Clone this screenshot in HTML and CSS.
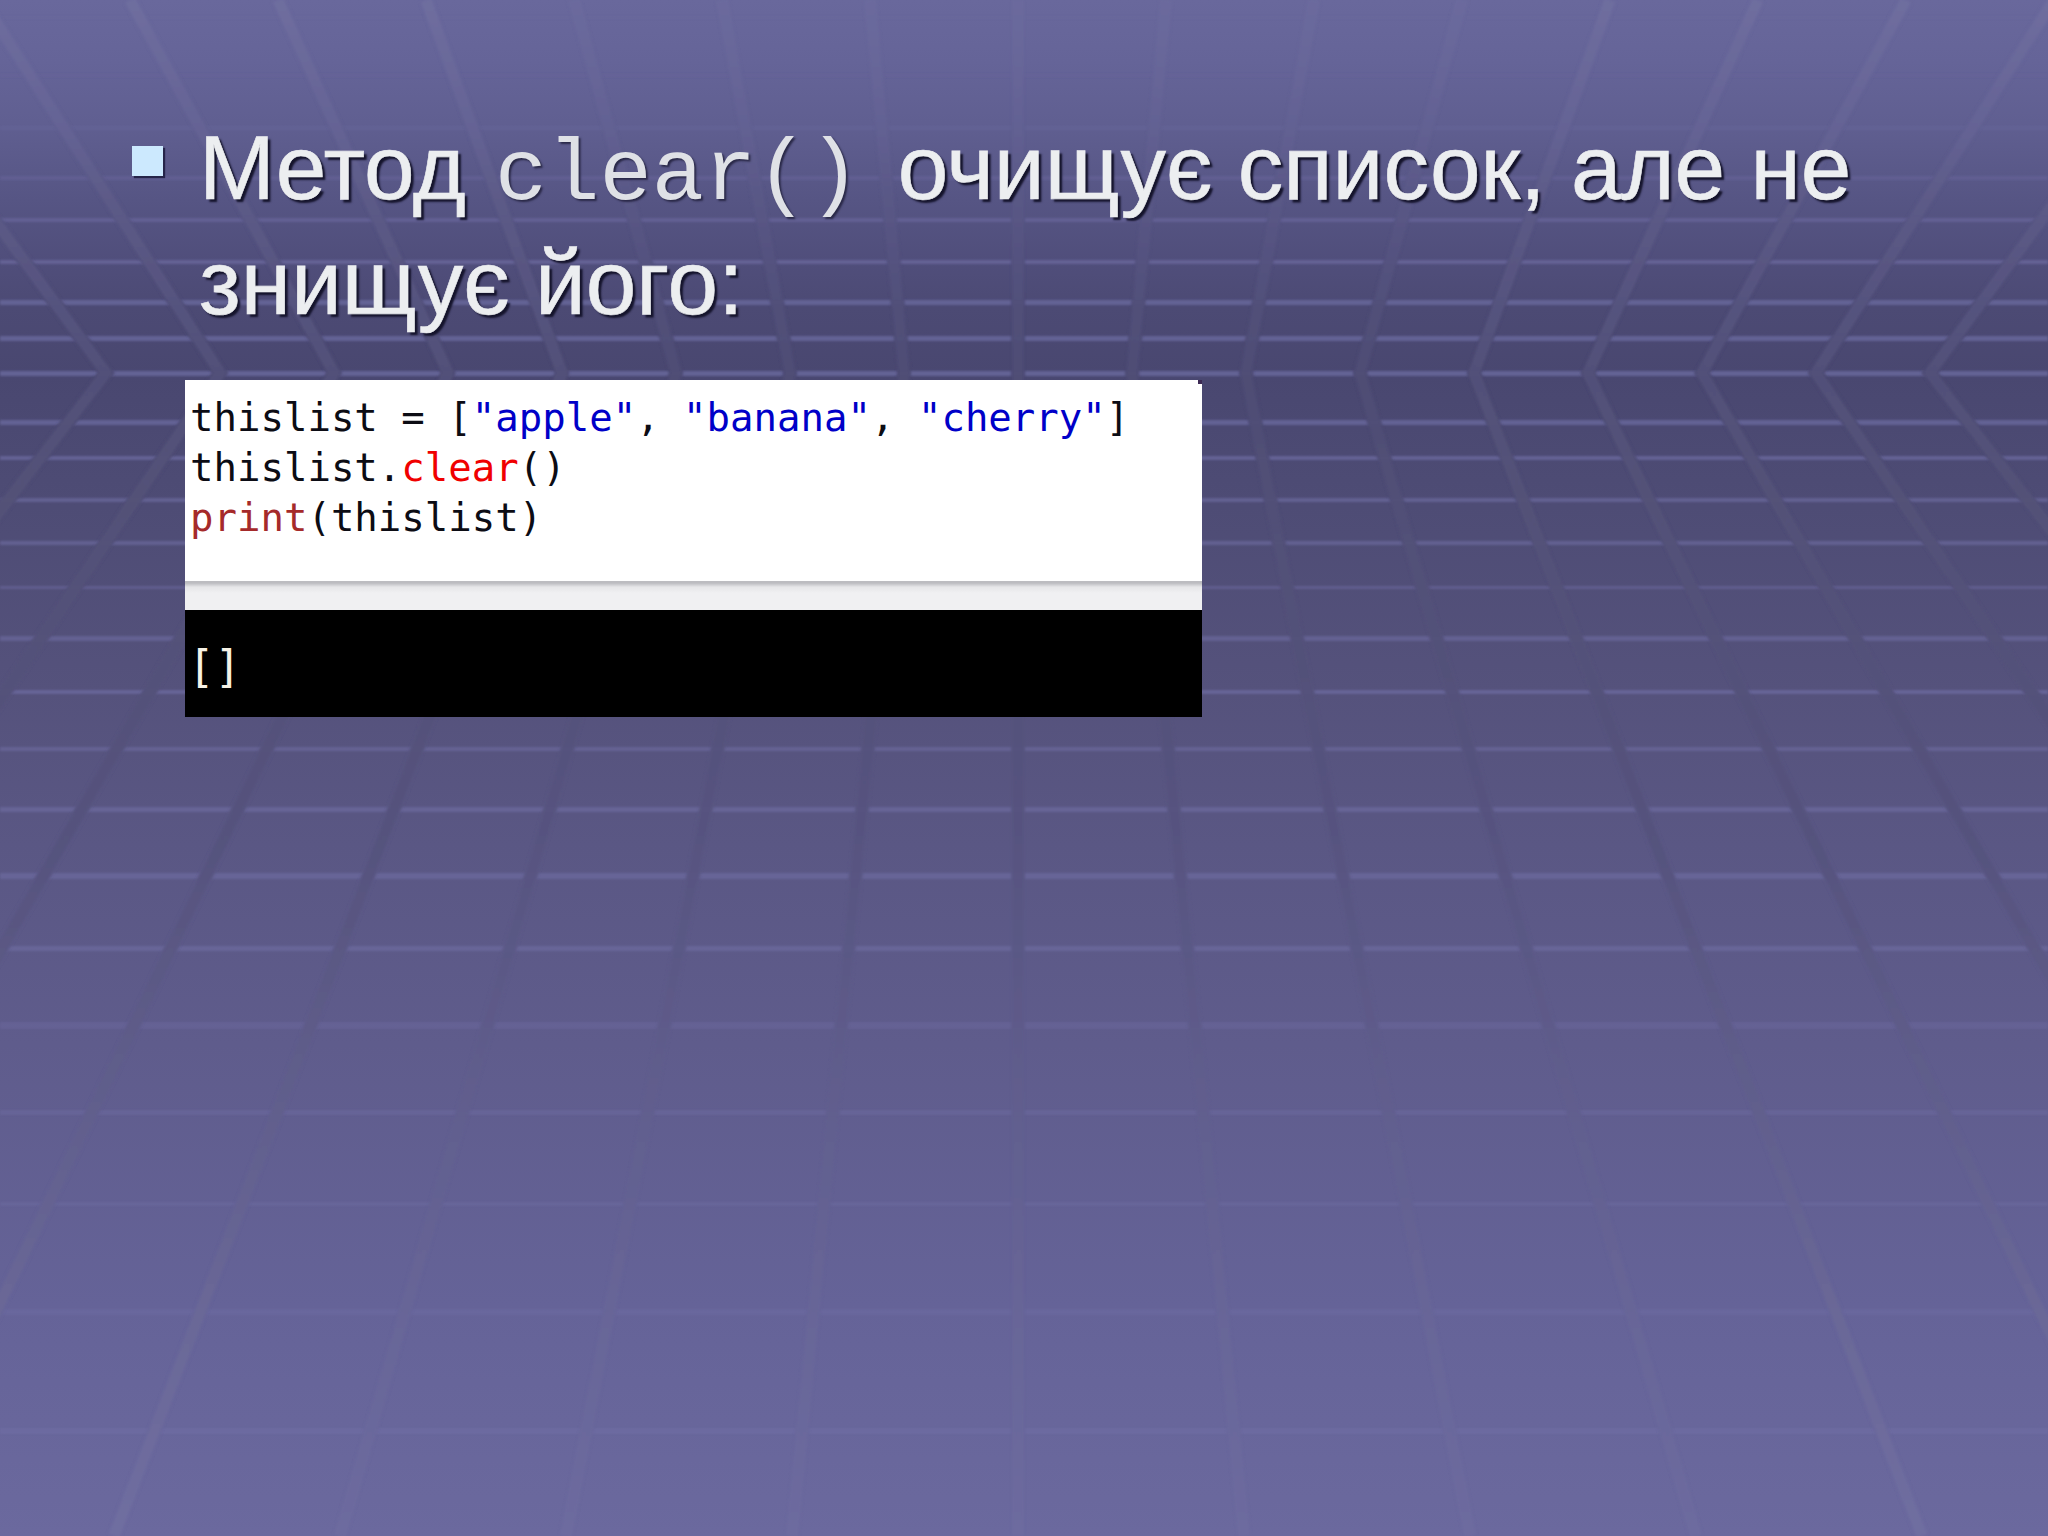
FILE: index.html
```html
<!DOCTYPE html>
<html lang="uk">
<head>
<meta charset="utf-8">
<title>Метод clear()</title>
<link rel="stylesheet" href="styles.css">
</head>
<body>
<main class="slide">
  <svg class="backdrop" viewBox="0 0 2048 1536" width="2048" height="1536" aria-hidden="true">
    <defs>
      <linearGradient id="bg" gradientUnits="userSpaceOnUse" x1="0" y1="0" x2="0" y2="1536">
        <stop offset="0" stop-color="#69689c"/>
        <stop offset="0.04" stop-color="#656498"/>
        <stop offset="0.08" stop-color="#605f91"/>
        <stop offset="0.13" stop-color="#565584"/>
        <stop offset="0.17" stop-color="#504e7b"/>
        <stop offset="0.2" stop-color="#4c4a74"/>
        <stop offset="0.243" stop-color="#494770"/>
        <stop offset="0.33" stop-color="#4e4c75"/>
        <stop offset="0.45" stop-color="#55527c"/>
        <stop offset="0.55" stop-color="#5a5784"/>
        <stop offset="0.68" stop-color="#5f5c8c"/>
        <stop offset="0.85" stop-color="#656398"/>
        <stop offset="1" stop-color="#6b699e"/>
      </linearGradient>
      <linearGradient id="bar" gradientUnits="userSpaceOnUse" x1="0" y1="0" x2="0" y2="1536">
        <stop offset="0" stop-color="#6f6e9f"/>
        <stop offset="0.08" stop-color="#666496"/>
        <stop offset="0.13" stop-color="#5d5b88"/>
        <stop offset="0.243" stop-color="#53517a"/>
        <stop offset="0.33" stop-color="#555379"/>
        <stop offset="0.45" stop-color="#54527a"/>
        <stop offset="0.55" stop-color="#55527d"/>
        <stop offset="0.68" stop-color="#5e5c89"/>
        <stop offset="0.85" stop-color="#6a6897"/>
        <stop offset="1" stop-color="#706ea1"/>
      </linearGradient>
      <filter id="soft" x="0" y="-0.01" width="1" height="1.02">
        <feGaussianBlur stdDeviation="0.9"/>
      </filter>
    </defs>
    <rect width="2048" height="1536" fill="url(#bg)"/>
    <g class="rules">
      <rect y="16" width="2048" height="3" opacity="0.1"/>
      <rect y="74" width="2048" height="3" opacity="0.14"/>
      <rect y="126" width="2048" height="4" opacity="0.25"/>
      <rect y="176" width="2048" height="4" opacity="0.38"/>
      <rect y="218" width="2048" height="4" opacity="0.55"/>
      <rect y="260" width="2048" height="4" opacity="0.68"/>
      <rect y="300" width="2048" height="5" opacity="0.72"/>
      <rect y="336" width="2048" height="5" opacity="0.72"/>
      <rect y="371" width="2048" height="5" opacity="0.75"/>
      <rect y="420" width="2048" height="5" opacity="0.72"/>
      <rect y="456" width="2048" height="4" opacity="0.7"/>
      <rect y="498" width="2048" height="4" opacity="0.65"/>
      <rect y="541" width="2048" height="4" opacity="0.62"/>
      <rect y="586" width="2048" height="3" opacity="0.55"/>
      <rect y="636" width="2048" height="5" opacity="0.6"/>
      <rect y="690" width="2048" height="4" opacity="0.7"/>
      <rect y="747" width="2048" height="4" opacity="0.6"/>
      <rect y="807" width="2048" height="5" opacity="0.65"/>
      <rect y="873" width="2048" height="6" opacity="0.65"/>
      <rect y="946" width="2048" height="5" opacity="0.62"/>
      <rect y="1022" width="2048" height="7" opacity="0.4"/>
      <rect y="1110" width="2048" height="5" opacity="0.42"/>
      <rect y="1202" width="2048" height="4" opacity="0.45"/>
      <rect y="1309" width="2048" height="6" opacity="0.5"/>
      <rect y="1428" width="2048" height="6" opacity="0.7"/>
    </g>
    <g class="grid">
      <path class="gaps" d="M870 0L904 373L792 1536M1166 0L1132 373L1244 1536M722 0L790 373L566 1536M1314 0L1246 373L1470 1536M574 0L676 373L340 1536M1462 0L1360 373L1696 1536M426 0L562 373L114 1536M1610 0L1474 373L1922 1536M278 0L448 373L-112 1536M1758 0L1588 373L2148 1536M130 0L334 373L-338 1536M1906 0L1702 373L2374 1536M-18 0L220 373L-564 1536M2054 0L1816 373L2600 1536M-166 0L106 373L-790 1536M2202 0L1930 373L2826 1536M1018 0V1536"/>
      <path class="bars bars-inner" d="M870 0L904 373L792 1536M1166 0L1132 373L1244 1536M722 0L790 373L566 1536M1314 0L1246 373L1470 1536M574 0L676 373L340 1536M1462 0L1360 373L1696 1536M1018 0V1536"/>
      <path class="bars" d="M426 0L562 373L114 1536M1610 0L1474 373L1922 1536M278 0L448 373L-112 1536M1758 0L1588 373L2148 1536M130 0L334 373L-338 1536M1906 0L1702 373L2374 1536M-18 0L220 373L-564 1536M2054 0L1816 373L2600 1536M-166 0L106 373L-790 1536M2202 0L1930 373L2826 1536"/>
    </g>
  </svg>

  <section class="point">
    <span class="bullet"></span>
    <p class="point-text">Метод <code class="inline-code">clear()</code> очищує список, але не знищує його:</p>
  </section>

  <figure class="shot">
    <pre class="editor"><span class="t-dark">thislist = [</span><span class="t-str">"apple"</span><span class="t-dark">, </span><span class="t-str">"banana"</span><span class="t-dark">, </span><span class="t-str">"cherry"</span><span class="t-dark">]</span>
<span class="t-dark">thislist.</span><span class="t-call">clear</span><span class="t-dark">()</span>
<span class="t-fn">print</span><span class="t-dark">(thislist)</span></pre>
    <div class="divider"></div>
    <pre class="console">[]</pre>
  </figure>
</main>
</body>
</html>
```
FILE: styles.css
```css
html, body {
  margin: 0;
  padding: 0;
  background: #55527c;
}

.slide {
  position: relative;
  width: 2048px;
  height: 1536px;
  padding-top: 110px;
  box-sizing: border-box;
  overflow: hidden;
  font-family: "Liberation Sans", Arial, sans-serif;
}

.backdrop {
  position: absolute;
  inset: 0;
  display: block;
}

.rules {
  filter: url(#soft);
}

.rules rect {
  fill: #6e6ca2;
}

.grid {
  filter: url(#soft);
}

.gaps {
  fill: none;
  stroke: url(#bg);
  stroke-width: 14;
  opacity: 0.92;
}

.bars {
  fill: none;
  stroke: url(#bar);
  stroke-width: 11;
  stroke-linejoin: miter;
  opacity: 0.9;
}

.bars-inner {
  opacity: 0.5;
}

.point {
  position: relative;
  display: flex;
  align-items: flex-start;
  gap: 36px;
  padding-left: 132px;
}

.bullet {
  flex: none;
  width: 31px;
  height: 30px;
  margin-top: 36px;
  background: #cce9fe;
  box-shadow: 2px 2px 1px #26254a;
}

.point-text {
  width: 1700px;
  margin: 0;
  font-size: 91px;
  line-height: 115px;
  color: #eceef0;
  -webkit-text-stroke: 0.6px #eceef0;
  text-shadow: 3px 3px 2px #15142c;
}

.inline-code {
  font-family: "Liberation Mono", "Courier New", monospace;
  font-size: 87px;
  line-height: 1;
  margin: 0 12px 0 4px;
  color: #dfe1e6;
  -webkit-text-stroke: 0;
  text-shadow: 2px 2px 2px #2a2948;
  white-space: pre;
}

.shot {
  position: relative;
  width: 1017px;
  height: 337px;
  margin: 40px 0 0 185px;
  display: flex;
  flex-direction: column;
  background: #000;
}

.shot::after {
  content: "";
  position: absolute;
  top: 0;
  right: 0;
  width: 4px;
  height: 4px;
  background: #3d2a55;
}

.editor,
.console {
  margin: 0;
  font-family: "DejaVu Sans Mono", "Liberation Mono", monospace;
  font-size: 39px;
  line-height: 50px;
}

.editor {
  height: 201px;
  padding: 13px 0 0 5px;
  box-sizing: border-box;
  background: #fff;
}

.t-dark { color: #0c0c14; }
.t-str { color: #0000c8; }
.t-call { color: #f00000; }
.t-fn { color: #a52a2a; }

.divider {
  height: 29px;
  background: linear-gradient(#bcbcc0 0, #bcbcc0 2px, #e6e6e8 6px, #f0f0f2 12px);
}

.console {
  flex: 1;
  padding: 32px 0 0 3px;
  font-size: 44px;
  color: #f6f2e6;
}
```
